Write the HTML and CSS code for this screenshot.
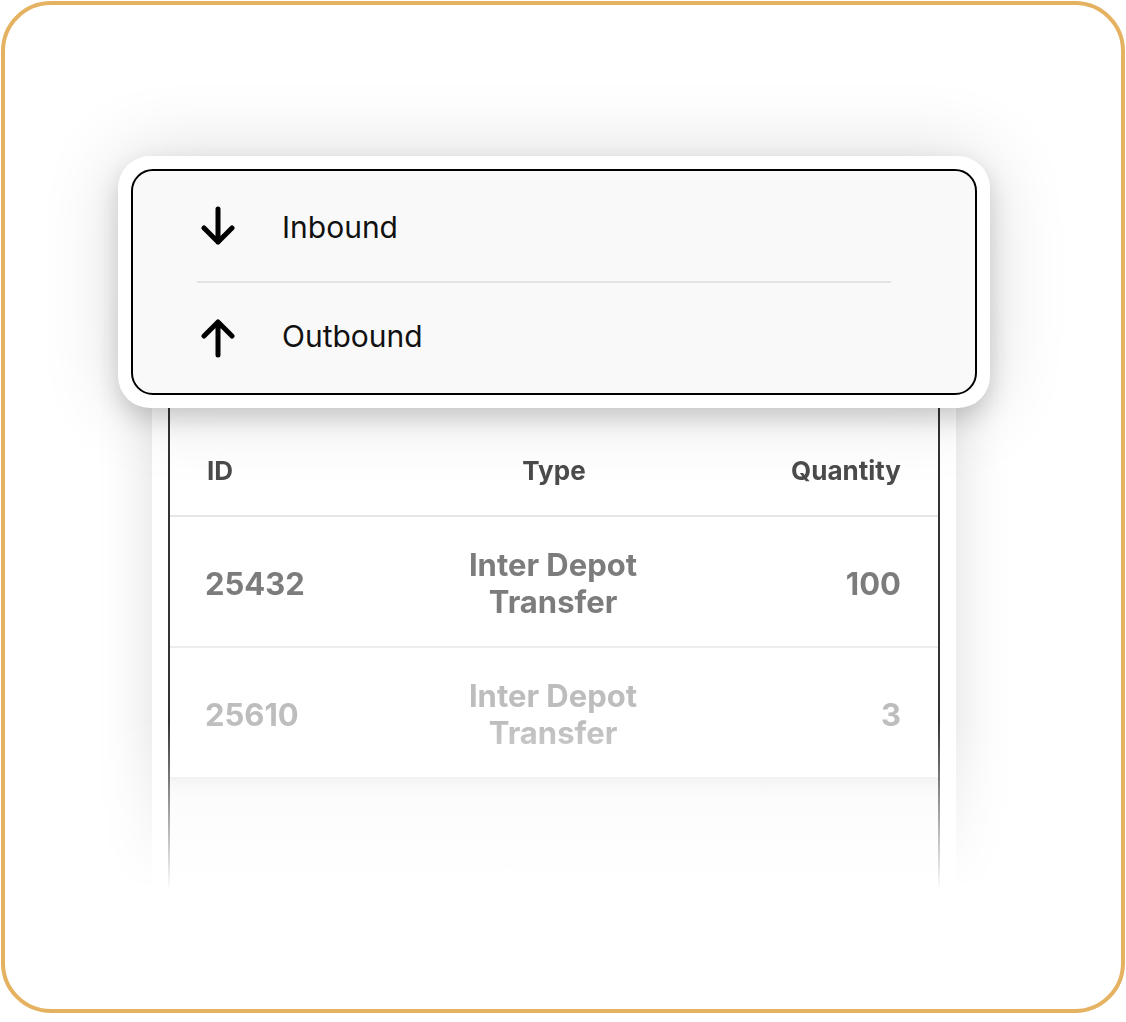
FILE: index.html
```html
<!DOCTYPE html>
<html lang="en">
<head>
    <meta charset="UTF-8">
    <meta name="viewport" content="width=device-width, initial-scale=1.0">
    <title>Movements</title>
    <link rel="stylesheet" href="styles.css">
</head>
<body>
    <div class="frame">
        <!-- direction picker, sits over the list -->
        <div class="menu">
            <div class="menu-inner">
                <div class="menu-item">
                    <svg class="arrow" viewBox="0 0 34 40" width="34" height="40">
                        <path d="M17 3 V36 M3 22 L17 36 L31 22" />
                    </svg>
                    <span>Inbound</span>
                </div>
                <div class="menu-sep"></div>
                <div class="menu-item up">
                    <svg class="arrow" viewBox="0 0 34 40" width="34" height="40">
                        <path d="M17 37 V4 M3 18 L17 4 L31 18" />
                    </svg>
                    <span>Outbound</span>
                </div>
            </div>
        </div>

        <div class="fade">
            <div class="device">
                <div class="sheet">
                    <div class="sheet-top"></div>
                    <div class="row head">
                        <div class="c-id">ID</div>
                        <div class="c-type">Type</div>
                        <div class="c-qty">Quantity</div>
                    </div>
                    <div class="row item">
                        <div class="c-id">25432</div>
                        <div class="c-type">Inter Depot<br>Transfer</div>
                        <div class="c-qty">100</div>
                    </div>
                    <div class="row item faded">
                        <div class="c-id">25610</div>
                        <div class="c-type">Inter Depot<br>Transfer</div>
                        <div class="c-qty">3</div>
                    </div>
                    <div class="row-empty"></div>
                </div>
            </div>
        </div>
    </div>
</body>
</html>
```

FILE: styles.css
```css
body {
    margin: 0;
    padding: 0;
    background: white;
    font-family: Inter, "Noto Sans", sans-serif;
}

.frame {
    position: relative;
    box-sizing: border-box;
    width: 1124px;
    height: 1012px;
    margin: 1px;
    padding: 235px 0 0 87px;
    border: 4px solid #e4b260;
    border-radius: 50px;
    overflow: hidden;
}

/* Menu */
.menu {
    position: absolute;
    left: 113px;
    top: 151px;
    z-index: 2;
    box-sizing: border-box;
    width: 872px;
    height: 252px;
    padding: 13px;
    background: white;
    border-radius: 32px;
    box-shadow: 0 10px 24px rgba(0, 0, 0, 0.16), 0 0 80px rgba(0, 0, 0, 0.14);
}
.menu-inner {
    height: 100%;
    box-sizing: border-box;
    border: 2px solid #000;
    border-radius: 22px;
    background: #f9f9f9;
}
.menu-item {
    display: flex;
    align-items: center;
    gap: 47px;
    height: 110px;
    padding-left: 68px;
    font-size: 30px;
    color: #111;
}
.menu-item span {
    position: relative;
    top: 1px;
}
.menu-item.up span {
    top: -2px;
}
.arrow path {
    fill: none;
    stroke: #000;
    stroke-width: 5;
    stroke-linecap: round;
    stroke-linejoin: round;
}
.menu-sep {
    height: 2px;
    margin: 0 84px 0 64px;
    background: #e4e4e4;
}

/* List */
.fade {
    position: relative;
    width: 804px;
    padding: 60px;
    -webkit-mask-image: linear-gradient(to bottom, #000 0, #000 480px, transparent 650px);
    mask-image: linear-gradient(to bottom, #000 0, #000 480px, transparent 650px);
}
.device {
    height: 660px;
    padding: 16px 16px 0;
    background: white;
    border-radius: 30px;
    box-shadow: 0 0 55px rgba(0, 0, 0, 0.14);
}
.sheet {
    height: 100%;
    box-sizing: border-box;
    border: 2px solid #333;
    border-bottom: none;
    border-radius: 18px 18px 0 0;
    background: white;
}
.sheet-top {
    height: 107px;
}
.row {
    display: grid;
    grid-template-columns: 1fr 1fr 1fr;
    align-items: center;
    padding: 0 37px 0 35px;
    border-bottom: 2px solid #ededed;
    font-weight: 700;
}
.c-type {
    text-align: center;
}
.c-qty {
    text-align: right;
}
.head {
    height: 90px;
    padding-left: 37px;
    font-size: 26px;
    color: #4b4b4b;
    border-bottom-color: #e6e6e6;
}
.item {
    height: 129px;
    font-size: 31px;
    line-height: 37px;
    color: #7c7c7c;
}
.item .c-id,
.item .c-qty {
    position: relative;
    top: 2px;
}
.item .c-type {
    position: relative;
    top: 1px;
}
.faded {
    color: #bdbdbd;
    border-bottom-color: #ececec;
}
.row-empty {
    height: 140px;
    background: linear-gradient(to bottom, #f0f0f0 0, #f9f9f9 20px, #fcfcfc 100%);
}
```
